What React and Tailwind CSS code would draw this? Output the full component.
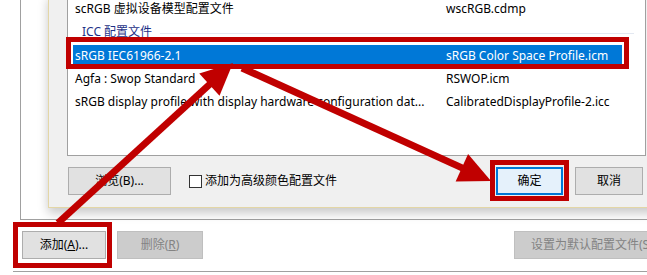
import React from 'react';

// arrow polygon helper: line from start to tip, with a triangular head
const arrowParts = (sx, sy, tx, ty, headLen = 32, headHalf = 15) => {
    const dx = tx - sx;
    const dy = ty - sy;
    const len = Math.hypot(dx, dy);
    const ux = dx / len;
    const uy = dy / len;
    const bx = tx - ux * headLen;
    const by = ty - uy * headLen;
    const nx = -uy;
    const ny = ux;
    const head = `${tx},${ty} ${bx + nx * headHalf},${by + ny * headHalf} ${bx - nx * headHalf},${by - ny * headHalf}`;
    return { line: { x1: sx, y1: sy, x2: bx + ux * 2, y2: by + uy * 2 }, head };
};

const rows = [
    { name: 'sRGB IEC61966-2.1', file: 'sRGB Color Space Profile.icm', selected: true },
    { name: 'Agfa : Swop Standard', file: 'RSWOP.icm' },
    { name: 'sRGB display profile with display hardware configuration dat...', file: 'CalibratedDisplayProfile-2.icc' },
];

const Button = ({ children, className = '' }) => (
    <div
        className={`shrink-0 flex items-center justify-center h-full border border-[#adadad] bg-[#e1e1e1] text-[12px] leading-normal text-black ${className}`}
    >
        {children}
    </div>
);

const DisabledButton = ({ children, className = '' }) => (
    <div
        className={`shrink-0 flex items-center h-full border border-[#bfbfbf] bg-[#cccccc] text-[12px] leading-normal text-[#838383] whitespace-nowrap ${className}`}
    >
        {children}
    </div>
);

export default function App() {
    const a1 = arrowParts(58, 223, 233, 63);
    const a2 = arrowParts(242, 68, 491, 181);

    return (
        <div className="relative w-[647px] h-[275px] overflow-hidden bg-white font-['Noto_Sans','Noto_Sans_CJK_SC',sans-serif] leading-normal">
            {/* Outer window frame */}
            <div className="ml-[20px] h-[220px] border-l border-b border-[#a0a0a0]" />

            {/* Outer buttons */}
            <div className="flex mt-[11px] h-[28px]">
                <Button className="ml-[22px] w-[84px]">
                    添加(<span className="underline">A</span>)...
                </Button>
                <DisabledButton className="ml-[11px] w-[86px] justify-center">
                    删除(<span className="underline">R</span>)
                </DisabledButton>
                <DisabledButton className="ml-[311px] w-[160px] justify-start pl-[16px]">
                    设置为默认配置文件(S)
                </DisabledButton>
            </div>
            <div className="ml-[13px] mt-[12px] border-t border-[#a0a0a0]" />

            {/* Dialog window */}
            <div className="absolute left-[48px] top-[-6px] w-[650px] h-[214px] border border-[#e3d6a6] bg-[#f0f0f0] shadow-[0_5px_10px_rgba(0,0,0,0.22)] flex flex-col pl-[18px]">
                <div className="w-[579px] h-[161px] border border-[#a0a0a0] bg-white pt-[1px] text-[12px]">
                    <div className="h-[23px] flex items-center ml-[5px]">
                        <span className="pl-[2px] w-[373px] whitespace-nowrap">scRGB 虚拟设备模型配置文件</span>
                        <span className="whitespace-nowrap">wscRGB.cdmp</span>
                    </div>
                    <div className="h-[24px] flex items-center ml-[14px] mr-[11px]">
                        <span className="text-[#1e3287] whitespace-nowrap">ICC 配置文件</span>
                        <div className="flex-1 ml-[8px] border-t border-[#e3e8f1] mt-[2px]" />
                    </div>
                    {rows.map((r) => (
                        <div key={r.name} className="h-[23px] flex items-center ml-[5px] w-[549px]">
                            <div
                                className={`h-[21px] w-full flex items-center ${r.selected ? 'bg-[#0078d7] text-white' : 'text-black'}`}
                            >
                                <span className="shrink-0 pl-[2px] w-[373px] whitespace-nowrap">{r.name}</span>
                                <span className="whitespace-nowrap">{r.file}</span>
                            </div>
                        </div>
                    ))}
                </div>

                <div className="flex mt-[11px] h-[28px]">
                    <div className="shrink-0 w-[429px] flex items-center h-full pl-[1px]">
                        <Button className="w-[103px]">浏览(B)...</Button>
                        <div className="shrink-0 ml-[18px] w-[13px] h-[13px] border border-[#333333] bg-white" />
                        <span className="ml-[3px] text-[12px] whitespace-nowrap">添加为高级颜色配置文件</span>
                    </div>
                    <div className="shrink-0 w-[67px] h-full flex items-center justify-center border-2 border-[#0078d7] bg-[#e5f1fb] text-[12px]">
                        确定
                    </div>
                    <Button className="ml-[12px] w-[68px]">取消</Button>
                </div>
            </div>

            {/* Annotations */}
            <div className="absolute left-[66px] top-[37px] w-[563px] h-[32px] border-[5px] border-[#c00000]" />
            <div className="absolute left-[490px] top-[160px] w-[79px] h-[41px] border-[5px] border-[#c00000]" />
            <div className="absolute left-[13px] top-[222px] w-[99px] h-[46px] border-[5px] border-[#c00000]" />
            <svg className="absolute inset-0 pointer-events-none" width="647" height="275">
                <line {...a1.line} stroke="#c00000" strokeWidth="7" />
                <polygon points={a1.head} fill="#c00000" />
                <line {...a2.line} stroke="#c00000" strokeWidth="7" />
                <polygon points={a2.head} fill="#c00000" />
            </svg>
        </div>
    );
}
